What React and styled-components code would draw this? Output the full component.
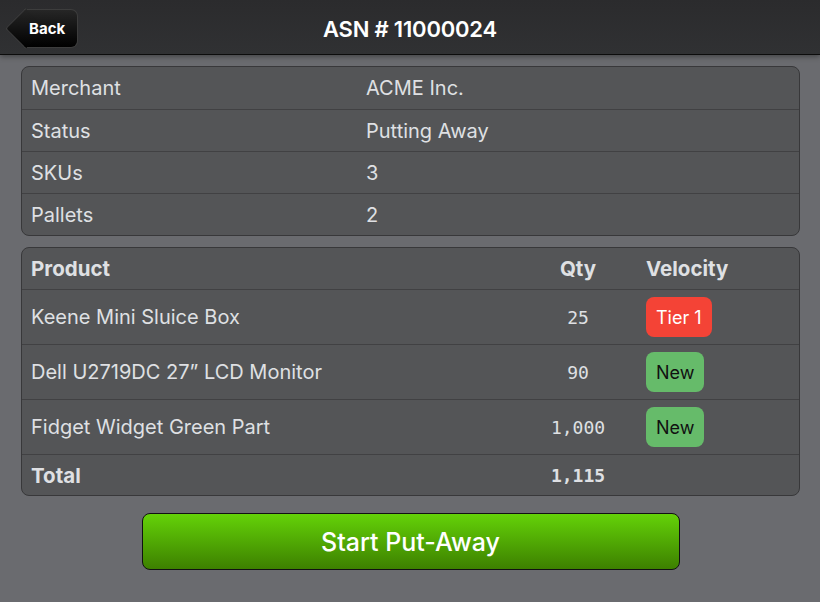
import React from "react";
import styled, { createGlobalStyle } from "styled-components";

const Global = createGlobalStyle`
  html, body { margin: 0; padding: 0; background: #6a6b6f; }
  body { font-family: Inter, "Noto Sans", sans-serif; -webkit-font-smoothing: antialiased; }
  * { box-sizing: border-box; }
`;

const Page = styled.div`
  width: 820px;
  height: 602px;
  background: #6a6b6f;
  display: flex;
  flex-direction: column;
`;

const Header = styled.header`
  position: relative;
  height: 55px;
  flex: 0 0 55px;
  padding-top: 3px;
  background: linear-gradient(#2b2b2d, #303133);
  border-bottom: 1px solid #0c0c0c;
  box-shadow: 0 2px 5px rgba(0, 0, 0, 0.35);
  display: flex;
  align-items: center;
  justify-content: center;
  z-index: 1;
`;

const Title = styled.h1`
  margin: 0;
  font-size: 22px;
  font-weight: 600;
  color: #ffffff;
  letter-spacing: -0.2px;
`;

const BackButton = styled.button`
  position: absolute;
  left: 24px;
  top: 9px;
  height: 39px;
  width: 54px;
  padding: 0 0 0 5px;
  border: 1px solid #3d3d3d;
  border-left: none;
  border-radius: 0 7px 7px 0;
  background: linear-gradient(#262626, #000);
  color: #fff;
  font-family: Inter, sans-serif;
  font-weight: 700;
  font-size: 15px;
  display: flex;
  align-items: center;
  justify-content: flex-start;
  &::before {
    content: "";
    position: absolute;
    left: -13px;
    top: 4px;
    width: 28px;
    height: 28px;
    transform: rotate(45deg);
    background: linear-gradient(135deg, #262626, #000);
    border-left: 1px solid #3d3d3d;
    border-bottom: 1px solid #3d3d3d;
    border-radius: 0 0 0 3px;
    z-index: 0;
  }
  span { position: relative; z-index: 1; }
`;

const Content = styled.main`
  padding: 11px 20px 0 21px;
  display: flex;
  flex-direction: column;
  gap: 11px;
`;

const Card = styled.section`
  background: #545557;
  border: 1px solid #38383a;
  border-radius: 8px;
  overflow: hidden;
`;

const InfoRow = styled.div`
  display: grid;
  grid-template-columns: 335px 1fr;
  height: 42px;
  align-items: center;
  padding: 0 9px;
  color: #dfe0e3;
  font-size: 20px;
  font-weight: 400;
  & + & { border-top: 1px solid #414143; }
`;

const TableRow = styled.div`
  display: grid;
  grid-template-columns: 1fr 116px 154px;
  align-items: center;
  padding: 0 9px;
  height: ${(p) => (p.$tall ? "55px" : "41px")};
  color: #dfe0e3;
  font-size: ${(p) => (p.$bold ? "20.5px" : "20px")};
  font-weight: ${(p) => (p.$bold ? 700 : 400)};
  & + & { border-top: 1px solid #414143; }
`;

const QtyCell = styled.div`
  text-align: center;
  font-family: ${(p) => (p.$head ? "Inter, sans-serif" : '"DejaVu Sans Mono", monospace')};
  font-size: ${(p) => (p.$head ? "20.5px" : "18px")};
  font-weight: ${(p) => (p.$bold || p.$head ? 700 : 400)};
`;

const VelocityCell = styled.div`
  padding-left: 10px;
  display: flex;
`;

const Badge = styled.span`
  display: inline-flex;
  align-items: center;
  height: 40px;
  padding: 0 10px;
  border-radius: 8px;
  font-size: 18px;
  font-weight: 400;
  background: ${(p) => (p.$tone === "red" ? "#f44336" : "#66bb6a")};
  color: ${(p) => (p.$tone === "red" ? "#fff" : "#111")};
`;

const Footer = styled.div`
  display: flex;
  justify-content: center;
  padding-top: 6px;
`;

const StartButton = styled.button`
  width: 538px;
  height: 57px;
  border: 1px solid #111;
  border-radius: 8px;
  background: linear-gradient(#64d208, #3d8000);
  color: #fff;
  font-family: Inter, sans-serif;
  font-size: 25px;
  font-weight: 500;
`;

const info = [
  ["Merchant", "ACME Inc."],
  ["Status", "Putting Away"],
  ["SKUs", "3"],
  ["Pallets", "2"],
];

const products = [
  { name: "Keene Mini Sluice Box", qty: "25", v: "Tier 1", tone: "red" },
  { name: "Dell U2719DC 27\u201d LCD Monitor", qty: "90", v: "New", tone: "green" },
  { name: "Fidget Widget Green Part", qty: "1,000", v: "New", tone: "green" },
];

export default function App() {
  return (
    <Page>
      <Global />
      <Header>
        <BackButton>
          <span>Back</span>
        </BackButton>
        <Title>ASN # 11000024</Title>
      </Header>
      <Content>
        <Card>
          {info.map(([k, v]) => (
            <InfoRow key={k}>
              <div>{k}</div>
              <div>{v}</div>
            </InfoRow>
          ))}
        </Card>
        <Card>
          <TableRow $bold>
            <div>Product</div>
            <QtyCell $head>Qty</QtyCell>
            <VelocityCell>Velocity</VelocityCell>
          </TableRow>
          {products.map((p) => (
            <TableRow key={p.name} $tall>
              <div>{p.name}</div>
              <QtyCell>{p.qty}</QtyCell>
              <VelocityCell>
                <Badge $tone={p.tone}>{p.v}</Badge>
              </VelocityCell>
            </TableRow>
          ))}
          <TableRow $bold>
            <div>Total</div>
            <QtyCell $bold>1,115</QtyCell>
            <VelocityCell />
          </TableRow>
        </Card>
        <Footer>
          <StartButton>Start Put-Away</StartButton>
        </Footer>
      </Content>
    </Page>
  );
}
